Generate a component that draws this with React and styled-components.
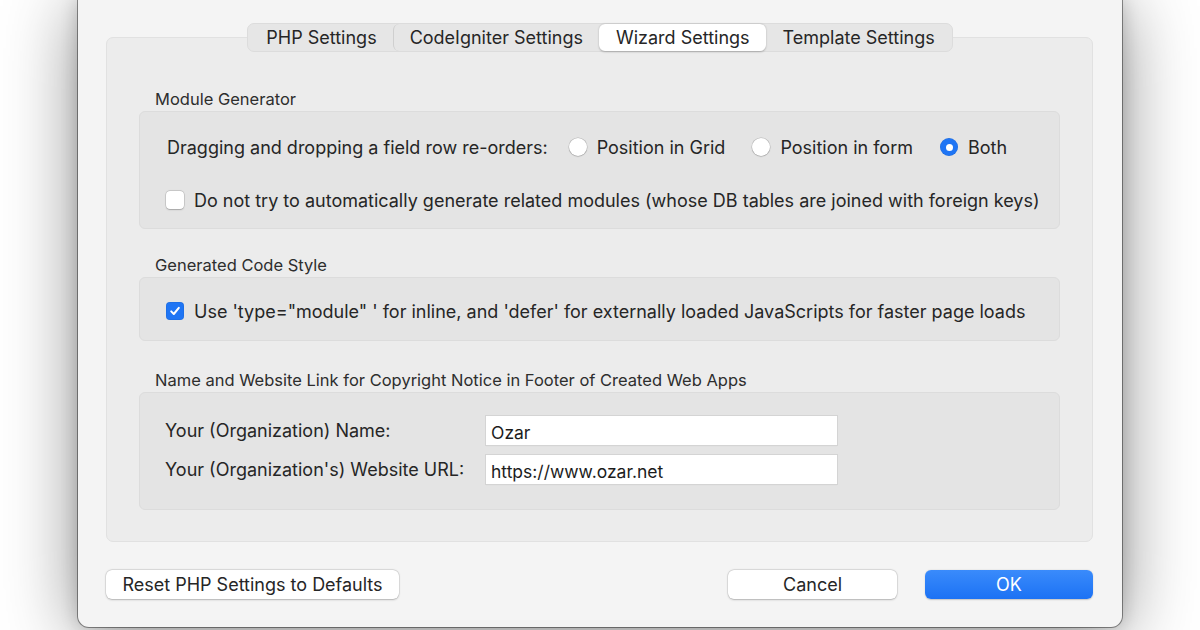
import styled, { createGlobalStyle } from "styled-components";

const GlobalStyle = createGlobalStyle`
  html, body {
    margin: 0;
    padding: 0;
    background: #ffffff;
  }
  body {
    width: 1200px;
    height: 630px;
    overflow: hidden;
    font-family: "Inter", "Liberation Sans", sans-serif;
    color: #262626;
  }
`;

const tabs = ["PHP Settings", "CodeIgniter Settings", "Wizard Settings", "Template Settings"];
const ACTIVE = "Wizard Settings";

export default function App() {
  return (
    <>
      <GlobalStyle />
      <Page>
        <Window>
          <TabBar>
            {tabs.map((t, i) => (
              <Tab key={t} $active={t === ACTIVE} $sep={i > 0 && tabs[i - 1] !== ACTIVE && t !== ACTIVE}>
                {t}
              </Tab>
            ))}
          </TabBar>
          <TabBox>
            <GroupLabel>Module Generator</GroupLabel>
            <Group $pt={24} $pb={17}>
              <Row>
                <span>Dragging and dropping a field row re-orders:</span>
                <RadioSet>
                  <RadioOpt><Radio /> Position in Grid</RadioOpt>
                  <RadioOpt><Radio /> Position in form</RadioOpt>
                  <RadioOpt><Radio $on /> Both</RadioOpt>
                </RadioSet>
              </Row>
              <Row $mt={31}>
                <CheckOpt>
                  <Check />
                  Do not try to automatically generate related modules (whose DB tables are joined with foreign keys)
                </CheckOpt>
              </Row>
            </Group>

            <GroupLabel $mt={27}>Generated Code Style</GroupLabel>
            <Group $pt={22} $pb={18}>
              <Row>
                <CheckOpt>
                  <Check $on>
                    <svg width="12" height="12" viewBox="0 0 12 12">
                      <path d="M2.2 6.4 L4.8 9 L9.8 2.8" fill="none" stroke="#fff" strokeWidth="2" strokeLinecap="round" strokeLinejoin="round" />
                    </svg>
                  </Check>
                  Use 'type="module" ' for inline, and 'defer' for externally loaded JavaScripts for faster page loads
                </CheckOpt>
              </Row>
            </Group>

            <GroupLabel $mt={30}>Name and Website Link for Copyright Notice in Footer of Created Web Apps</GroupLabel>
            <Group $pt={23} $pb={25}>
              <FormGrid>
                <FieldLabel>Your (Organization) Name:</FieldLabel>
                <TextInput defaultValue="Ozar" />
                <FieldLabel>Your (Organization's) Website URL:</FieldLabel>
                <TextInput defaultValue="https://www.ozar.net" />
              </FormGrid>
            </Group>
          </TabBox>
          <ButtonRow>
            <Button $w={293}>Reset PHP Settings to Defaults</Button>
            <RightButtons>
              <Button $w={169}>Cancel</Button>
              <Button $w={168} $primary>OK</Button>
            </RightButtons>
          </ButtonRow>
        </Window>
      </Page>
    </>
  );
}

const Page = styled.div`
  width: 1200px;
  height: 630px;
  overflow: hidden;
  background: #ffffff;
`;

const Window = styled.div`
  margin-left: 78px;
  width: 1044px;
  height: 627px;
  box-sizing: border-box;
  padding: 23px 29px 28px 28px;
  background: #f4f4f4;
  border-radius: 0 0 11px 11px;
  box-shadow: 0 0 0 1px rgba(0, 0, 0, 0.4), 0 0 18px rgba(0, 0, 0, 0.18), 0 6px 75px rgba(0, 0, 0, 0.45);
  display: flex;
  flex-direction: column;
  & > * {
    flex-shrink: 0;
  }
`;

const TabBar = styled.div`
  position: relative;
  z-index: 1;
  align-self: center;
  display: flex;
  height: 29px;
  box-sizing: border-box;
  padding: 0 1px;
  background: #e6e6e6;
  border: 1px solid #dcdcdc;
  border-radius: 7px;
  margin-left: 1px;
`;

const Tab = styled.div`
  display: flex;
  align-items: center;
  padding: 0 16px;
  font-size: 18px;
  color: #262626;
  border-radius: 6px;
  background: ${(p) => (p.$active ? "#ffffff" : "transparent")};
  box-shadow: ${(p) => (p.$active ? "0 0.5px 2px rgba(0,0,0,0.25)" : "none")};
  border-left: 1px solid ${(p) => (p.$sep ? "#cfcfcf" : "transparent")};
`;

const TabBox = styled.div`
  margin-top: -15px;
  flex: 1;
  box-sizing: border-box;
  padding: 52px 32px 31px;
  background: #ececec;
  border: 1px solid #e1e1e1;
  border-radius: 7px;
  display: flex;
  flex-direction: column;
`;

const GroupLabel = styled.div`
  margin: ${(p) => p.$mt || 0}px 0 2px 16px;
  font-size: 16.5px;
  line-height: 19px;
  color: #2e2e2e;
`;

const Group = styled.div`
  box-sizing: border-box;
  padding: ${(p) => p.$pt}px 22px ${(p) => p.$pb}px 27px;
  background: #e4e4e4;
  border: 1px solid #dcdcdc;
  border-radius: 6px;
`;

const Row = styled.div`
  display: flex;
  align-items: center;
  height: 22px;
  margin-top: ${(p) => p.$mt || 0}px;
  font-size: 18px;
  white-space: nowrap;
`;

const RadioSet = styled.div`
  display: flex;
  align-items: center;
  gap: 27px;
  margin-left: 21px;
`;

const RadioOpt = styled.label`
  display: flex;
  align-items: center;
  gap: 10px;
`;

const Radio = styled.span`
  width: 18px;
  height: 18px;
  box-sizing: border-box;
  border-radius: 50%;
  background: ${(p) => (p.$on ? "#1f75f4" : "#ffffff")};
  box-shadow: ${(p) => (p.$on ? "inset 0 0 0 0.5px rgba(0,0,0,0.1)" : "0 0 0 0.5px rgba(0,0,0,0.18), 0 0.5px 1.5px rgba(0,0,0,0.2)")};
  display: flex;
  align-items: center;
  justify-content: center;
  &::after {
    content: "";
    display: ${(p) => (p.$on ? "block" : "none")};
    width: 7px;
    height: 7px;
    border-radius: 50%;
    background: #ffffff;
  }
`;

const CheckOpt = styled.label`
  display: flex;
  align-items: center;
  gap: 10px;
  margin-left: -1px;
`;

const Check = styled.span`
  width: 18px;
  height: 18px;
  box-sizing: border-box;
  border-radius: 4px;
  background: ${(p) => (p.$on ? "#1f75f4" : "#ffffff")};
  box-shadow: ${(p) => (p.$on ? "inset 0 0 0 0.5px rgba(0,0,0,0.1)" : "0 0 0 0.5px rgba(0,0,0,0.18), 0 0.5px 1.5px rgba(0,0,0,0.2)")};
  display: flex;
  align-items: center;
  justify-content: center;
`;

const FormGrid = styled.div`
  display: grid;
  grid-template-columns: 321px 351px;
  row-gap: 10px;
  align-items: center;
  margin-left: -2px;
`;

const FieldLabel = styled.div`
  font-size: 18px;
  color: #262626;
`;

const TextInput = styled.input`
  height: 29px;
  box-sizing: border-box;
  padding: 3px 5px 0;
  font-family: inherit;
  font-size: 17.5px;
  color: #1c1c1c;
  background: #ffffff;
  border: none;
  box-shadow: 0 0 0 1px #d4d4d4, 0 1px 1px rgba(0, 0, 0, 0.08);
  outline: none;
`;

const ButtonRow = styled.div`
  margin-top: 28px;
  display: flex;
  justify-content: space-between;
  align-items: center;
`;

const RightButtons = styled.div`
  display: flex;
  gap: 28px;
`;

const Button = styled.div`
  width: ${(p) => p.$w}px;
  height: 29px;
  box-sizing: border-box;
  display: flex;
  align-items: center;
  justify-content: center;
  font-size: 18px;
  border-radius: 6px;
  color: ${(p) => (p.$primary ? "#ffffff" : "#262626")};
  background: ${(p) => (p.$primary ? "linear-gradient(#3a8bfb, #1c72f4)" : "#ffffff")};
  box-shadow: ${(p) => (p.$primary ? "0 0.5px 1.5px rgba(0,0,0,0.2)" : "0 0 0 0.5px rgba(0,0,0,0.12), 0 0.5px 2px rgba(0,0,0,0.22)")};
`;
